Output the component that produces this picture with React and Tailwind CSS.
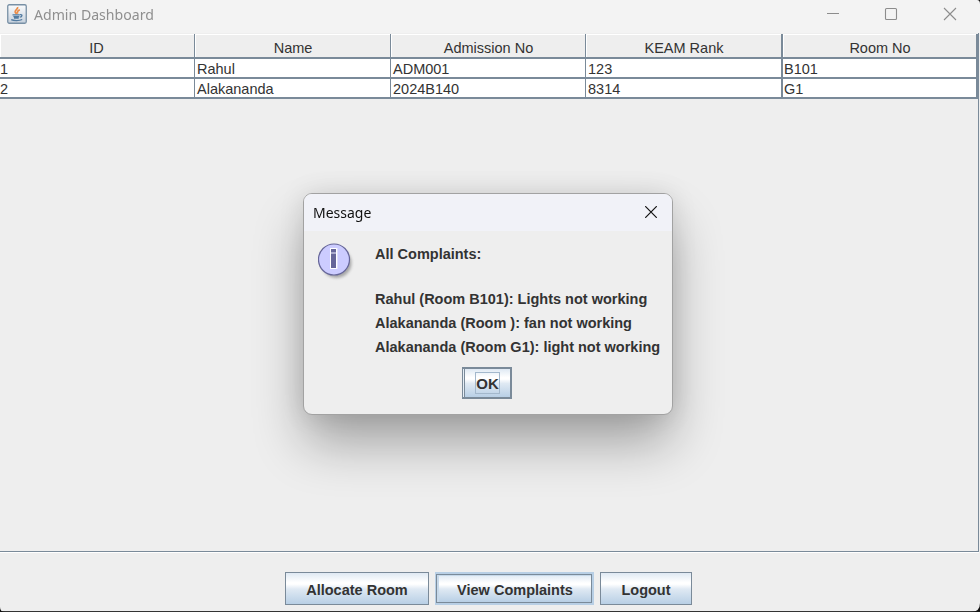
const COLS = [
  { title: 'ID', cells: ['1', '2'], box: 'w-[195px] border-r', pad: 'pl-0', head: 'pr-[1px]' },
  { title: 'Name', cells: ['Rahul', 'Alakananda'], box: 'w-[196px] border-r', pad: 'pl-[2px]', head: 'pl-[1px]' },
  { title: 'Admission No', cells: ['ADM001', '2024B140'], box: 'w-[195px] border-r', pad: 'pl-[2px]', head: 'pl-[1px]' },
  { title: 'KEAM Rank', cells: ['123', '8314'], box: 'w-[197px] border-r-2', pad: 'pl-[2px]', head: 'pl-[1px]' },
  { title: 'Room No', cells: ['B101', 'G1'], box: 'w-[195px] border-r-2', pad: 'pl-[1px]', head: 'pl-[1px]' },
];

function JavaIcon() {
  return (
    <svg width="20" height="20" viewBox="0 0 20 20" fill="none" className="shrink-0">
      <defs>
        <linearGradient id="jbg" x1="0" y1="0" x2="0" y2="1">
          <stop offset="0" stopColor="#fbfcfd" />
          <stop offset="1" stopColor="#c5d0dc" />
        </linearGradient>
      </defs>
      <rect x="0.75" y="0.75" width="18.5" height="18.5" rx="1.5" fill="url(#jbg)" stroke="#7890a5" strokeWidth="1.3" />
      <path d="M10.6 3C11.300 5.200 7.200 6 8.200 8.200L9.600 10M12.800 5.800C10.500 6.800 9.800 8 10.800 9.600" stroke="#ec8b45" strokeWidth="1.7" />
      <path d="M5.500 10.900H12.800M6.400 12.600H12.200M7 14H11.700M13 10.700C15.800 10.200 15.400 12.800 12.800 13.200M4.200 15.700C6.500 16.900 12.500 16.900 15.200 15.500" stroke="#527ba0" strokeWidth="1.3" />
    </svg>
  );
}

function InfoIcon() {
  return (
    <svg width="40" height="40" viewBox="0 0 40 40" className="shrink-0">
      <defs>
        <filter id="soft" x="-20%" y="-20%" width="150%" height="150%">
          <feGaussianBlur stdDeviation="1.500" />
        </filter>
      </defs>
      <circle cx="18.500" cy="20" r="15" fill="#777" opacity=".6" filter="url(#soft)" />
      <circle cx="16" cy="16.500" r="15.500" fill="#ccccff" stroke="#666699" strokeWidth="1.200" />
      <rect x="12" y="5" width="8" height="21" fill="#fff" opacity=".4" />
      <path d="M12.500 5.500H18.500V25.500H12.500ZM12.500 10H18.500" fill="none" stroke="#fff" strokeWidth="1" />
      <rect x="13" y="6" width="5" height="3.500" fill="#666699" />
      <rect x="13" y="10.500" width="5" height="14.500" fill="#666699" />
    </svg>
  );
}

const GRADIENT = 'bg-[linear-gradient(180deg,#dfe9f3_0%,#ffffff_30%,#ffffff_36%,#dfe9f3_52%,#b8cfe5_100%)]';

function MetalButton({ width, children, focused }) {
  if (focused) {
    return (
      <div className={`${width} flex h-[33px] border-2 border-l border-[#b8cfe5]`}>
        <button className={`flex flex-1 items-center justify-center border border-[#7a8a99] shadow-[inset_2px_1px_0_#c7d9ea] ${GRADIENT}`}>
          <span className="translate-x-px translate-y-[2px]">{children}</span>
        </button>
      </div>
    );
  }
  return (
    <button className={`${width} flex h-[33px] items-center justify-center border border-[#7a8a99] ${GRADIENT}`}>
      <span className="translate-y-[2px]">{children}</span>
    </button>
  );
}

function Dialog() {
  return (
    <div className="absolute left-[303px] top-[193px] flex h-[222px] w-[370px] flex-col overflow-visible rounded-[9px] border border-[#a2a2a2] bg-[#eeeeee] shadow-[0_30px_52px_-2px_rgba(0,0,0,0.32),0_0_26px_rgba(0,0,0,0.1)]">
      <div className="flex h-[37px] items-center justify-between rounded-t-[8px] bg-[#f1f2f8] pl-[9px] pr-[15px] font-['Noto_Sans',sans-serif] text-[14.5px] text-[#111]">
        <span className="origin-left scale-x-[0.965]">Message</span>
        <svg className="-mt-[2px]" width="12" height="12" viewBox="0 0 12 12" stroke="#111" strokeWidth="1.2">
          <path d="M.2 .2L11.8 11.8M11.8 .2L.2 11.8" />
        </svg>
      </div>
      <div className="flex pl-[14px] pt-[12px]">
        <InfoIcon />
        <div className="ml-[17px] whitespace-nowrap text-[14.5px] font-bold leading-[24px]">
          <p className="-mt-[1px] h-[45px]">All Complaints:</p>
          <p>Rahul (Room B101): Lights not working</p>
          <p>Alakananda (Room ): fan not working</p>
          <p>Alakananda (Room G1): light not working</p>
        </div>
      </div>
      <button className={`ml-[158px] mt-[8px] flex h-[32px] w-[50px] items-center justify-center border-2 border-l border-[#7a8a99] shadow-[inset_1px_0_0_#e6eef6,inset_2px_0_0_#7a8a99] ${GRADIENT}`}>
        <span className="flex h-[22px] w-[25px] translate-x-px items-center justify-center border border-[#a3b8cc] pt-[2px] text-[15px] font-bold">OK</span>
      </button>
    </div>
  );
}

export default function App() {
  return (
    <div className="relative flex h-[612px] w-[980px] flex-col overflow-hidden bg-[#eeeeee] font-['Liberation_Sans',Arial,sans-serif] text-[14.5px] text-[#333333]">
      <header className="flex h-[33px] shrink-0 items-center bg-[#f3f3f3] pl-[7px] text-[#8f8f8f]">
        <div className="-mt-[5px]"><JavaIcon /></div>
        <span className="-mt-[5px] ml-[7px] origin-left scale-x-[0.94] font-['Noto_Sans',sans-serif] text-[15px]">Admin Dashboard</span>
        <svg className="-mt-[5px] ml-auto mr-[23px]" width="130" height="14" viewBox="0 0 130 14" fill="none" stroke="#8c8c8c" strokeWidth="1.1">
          <path d="M0 6.5H12M117 1L129 13M129 1L117 13" />
          <rect x="58.500" y="1.500" width="11" height="11" rx="1" />
        </svg>
      </header>

      <main className="mr-px flex h-[519px] shrink-0 border-b border-r border-b-[#7a8a99] border-r-[#7a8a99] shadow-[0_1px_0_#fff]">
        <div className="mt-px flex h-[65px]">
          {COLS.map((c) => (
            <div key={c.title} className={`${c.box} border-[#7a8a99]`}>
              <div className={`flex h-[25px] items-center justify-center border-b-2 border-b-[#7a8a99] pt-[7px] shadow-[inset_1px_1px_0_#fff] ${c.head}`}>{c.title}</div>
              {c.cells.map((v) => (
                <div key={v} className={`flex h-[20px] items-center border-b-2 border-[#7a8a99] bg-white pt-[3px] ${c.pad}`}>{v}</div>
              ))}
            </div>
          ))}
        </div>
      </main>

      <footer className="mt-[20px] flex gap-[6px] pl-[285px] font-bold">
        <MetalButton width="w-[144px]">Allocate Room</MetalButton>
        <MetalButton width="w-[159px]" focused>View Complaints</MetalButton>
        <MetalButton width="w-[92px]">Logout</MetalButton>
      </footer>

      <Dialog />

      <div className="absolute bottom-0 left-0 h-px w-full bg-[#333]" />
      <svg className="absolute bottom-0 left-0" width="5" height="5"><path d="M0 0Q0 5 5 5H0Z" fill="#111" /></svg>
      <svg className="absolute bottom-0 right-0" width="9" height="9"><path d="M9 0Q9 9 0 9H9Z" fill="#111" /></svg>
      <svg className="absolute right-0 top-0" width="3" height="4"><path d="M0 0Q3 0 3 4V0Z" fill="#111" /></svg>
    </div>
  );
}
